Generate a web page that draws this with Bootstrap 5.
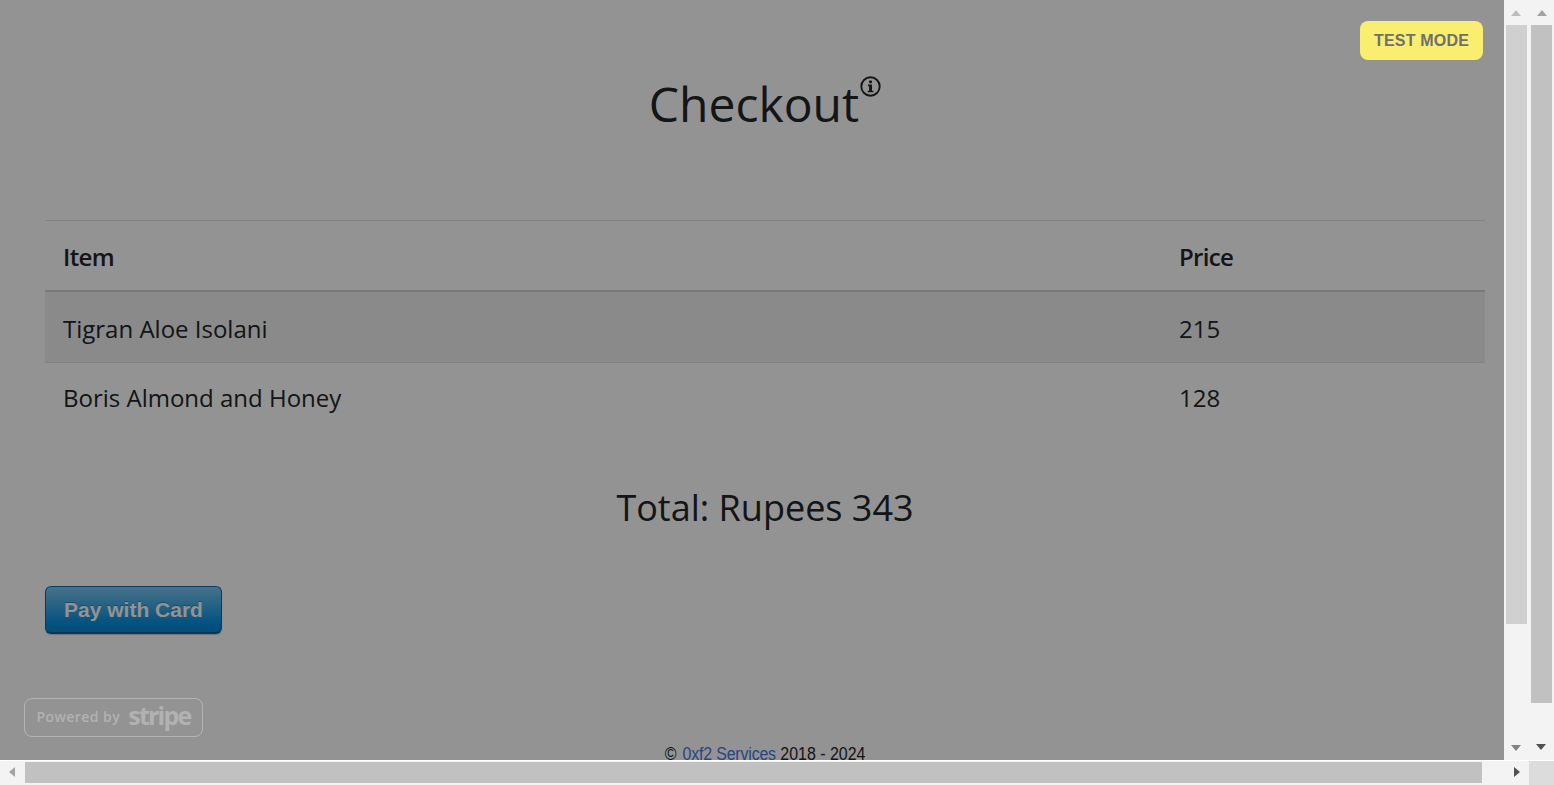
<!doctype html>
<html lang="en">
<head>
<meta charset="utf-8">
<title>Checkout</title>
<link href="https://cdn.jsdelivr.net/npm/bootstrap@5.3.0/dist/css/bootstrap.min.css" rel="stylesheet">
<style>
html,body{height:785px;overflow:hidden;background:#fff;}
body{font-family:"Open Sans",sans-serif;color:#212529;}
.shell{width:1554px;height:785px;}
.viewport{height:760px;}
.pagearea{width:1504px;height:760px;overflow:hidden;position:relative;background:#fff;}
.sheet{padding:0 19px 0 45px;}
.title-head{font-size:48px;font-weight:400;line-height:72px;margin:0;padding-top:68px;height:220px;text-align:center;color:#212529;}
.info-ic{display:inline-block;vertical-align:top;width:21px;height:21px;margin:8px 0 0 1px;}
.cart-table{width:1440px;margin:0;font-size:24px;color:#212529;border-top:1px solid #dee2e6;}
.cart-table th,.cart-table td{padding:0 18px;vertical-align:middle;font-weight:400;line-height:36px;}
.cart-table thead th{height:70px;padding-top:4px;font-weight:600;letter-spacing:-.65px;border-bottom:2px solid #d2d2d2;}
.cart-table tbody td{height:72px;padding-top:4px;}
.cart-table tbody tr:first-child td{background:#efefef;border-bottom:1px solid #dee2e6;}
.cart-table tbody tr:last-child td{height:69px;padding-top:1px;border:0;}
.col-price{width:324px;}
.total-line{font-size:36px;line-height:54px;margin:0;padding-top:49px;height:154px;text-align:center;width:1440px;font-weight:400;}
.pay-btn{display:block;width:177px;height:48px;border-radius:6px;border:1px solid #0b6aa8;border-bottom:2px solid #0a5f9a;background:linear-gradient(#7dc5ee,#008cdd 85%,#0a84d0);box-shadow:0 1px 1px rgba(0,0,0,.2);color:#fff;font:700 21px/46px "Liberation Sans",sans-serif;text-align:center;padding:0;text-shadow:0 -1px 0 rgba(0,0,0,.25);}
.foot-note{position:absolute;left:45px;top:743px;width:1440px;margin:0;text-align:center;font:18px/22px "Liberation Sans",sans-serif;color:#212529;transform:scaleX(.885);}
.foot-note a{color:#4478e6;text-decoration:none;margin-left:2px;letter-spacing:-.2px;}
.dim-layer{position:absolute;inset:0;background:rgba(0,0,0,.425);}
.test-flag{position:absolute;left:1360px;top:21px;width:123px;height:39px;background:#faee70;border-radius:8px;color:#6f6f6f;font:700 16px/39px "Liberation Sans",sans-serif;letter-spacing:.2px;text-align:center;}
.stripe-tag{position:absolute;left:24px;top:698px;width:179px;height:39px;border:1px solid #b4b4b4;border-radius:8px;color:#b2b2b2;gap:8px;padding-bottom:2px;}
.stripe-by{font:600 14px/1 "Open Sans",sans-serif;letter-spacing:.45px;}
.stripe-name{font:700 25px/1 "Open Sans",sans-serif;letter-spacing:-1.75px;position:relative;top:-1px;}
.vtrack{width:25px;height:760px;background:#f3f3f3;position:relative;}
.vtrack .thumb{position:absolute;left:2px;top:25px;width:21px;}
.vt-inner .thumb{height:599px;background:#d0d0d0;}
.vt-outer .thumb{height:678px;background:#c1c1c1;}
.htrack{height:25px;background:#f3f3f3;border-top:1px solid #fff;position:relative;}
.htrack .thumb{position:absolute;left:25px;top:1px;width:1457px;height:21px;background:#c1c1c1;}
.corner{position:absolute;left:1529px;top:0;width:25px;height:24px;background:#dcdcdc;}
.arr{position:absolute;width:0;height:0;border-style:solid;border-color:transparent;}
.up{left:7px;top:10px;border-width:0 5.5px 6px;}
.down{left:7px;top:745px;border-width:6px 5.5px 0;}
.vt-inner .up{border-bottom-color:#bdbdbd;}
.vt-inner .down{border-top-color:#838383;}
.vt-outer .up{border-bottom-color:#a3a3a3;left:8px;}
.vt-outer .down{border-top-color:#505050;left:7px;top:744px;}
.left{left:9px;top:6px;border-width:5.5px 6px 5.5px 0;border-right-color:#a3a3a3;}
.right{left:1514px;top:6px;border-width:5.5px 0 5.5px 6px;border-left-color:#505050;}
</style>
</head>
<body>
<div class="shell d-flex flex-column">
  <div class="viewport d-flex">
    <div class="pagearea">
      <div class="sheet">
        <h1 class="title-head">Checkout<svg class="info-ic" viewBox="0 0 21 21" aria-hidden="true"><circle cx="10.5" cy="10.5" r="9.2" fill="none" stroke="#212529" stroke-width="1.9"/><circle cx="10.5" cy="5.8" r="1.6" fill="#212529"/><path d="M8 8.6h4v6.1h1.4v1.6H7.7v-1.6h1.4v-4.5H8z" fill="#212529"/></svg></h1>
        <table class="table cart-table">
          <thead><tr><th>Item</th><th class="col-price">Price</th></tr></thead>
          <tbody>
            <tr><td>Tigran Aloe Isolani</td><td>215</td></tr>
            <tr><td>Boris Almond and Honey</td><td>128</td></tr>
          </tbody>
        </table>
        <h2 class="total-line">Total: Rupees 343</h2>
        <button type="button" class="btn pay-btn">Pay with Card</button>
      </div>
      <p class="foot-note">© <a href="#">0xf2 Services</a> 2018 - 2024</p>
      <div class="dim-layer"></div>
      <div class="test-flag">TEST MODE</div>
      <div class="stripe-tag d-flex align-items-center justify-content-center"><span class="stripe-by">Powered by</span><span class="stripe-name">stripe</span></div>
    </div>
    <div class="vtrack vt-inner"><span class="arr up"></span><div class="thumb"></div><span class="arr down"></span></div>
    <div class="vtrack vt-outer"><span class="arr up"></span><div class="thumb"></div><span class="arr down"></span></div>
  </div>
  <div class="htrack"><span class="arr left"></span><div class="thumb"></div><span class="arr right"></span><div class="corner"></div></div>
</div>
<script src="https://cdn.jsdelivr.net/npm/bootstrap@5.3.0/dist/js/bootstrap.bundle.min.js"></script>
</body>
</html>
